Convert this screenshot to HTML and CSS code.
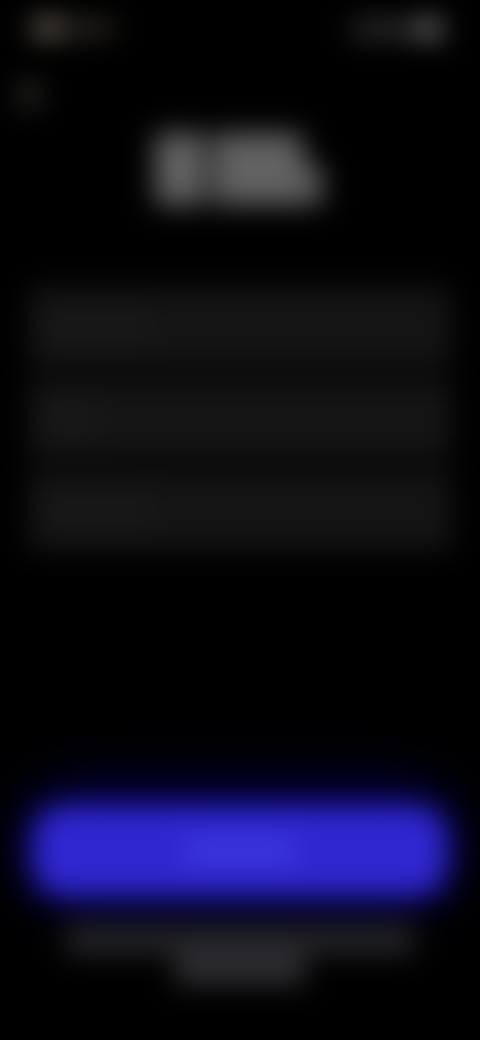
FILE: index.html
```html
<!DOCTYPE html>
<html lang="en">
<head>
<meta charset="utf-8">
<title>Blurred screen</title>
<link rel="stylesheet" href="styles.css">
</head>
<body>
<main class="screen">
  <header class="status">
    <div class="status-left"><span class="time"></span><span class="time-tail"></span></div>
    <div class="status-right"><span class="signal"></span><span class="battery"></span></div>
  </header>
  <div class="back"></div>
  <div class="title">
    <span class="title-a"></span>
    <span class="title-b"></span>
    <span class="title-c"></span>
  </div>
  <section class="list">
    <div class="row"><span class="row-label"></span></div>
    <div class="row"><span class="row-label short"></span></div>
    <div class="row"><span class="row-label"></span></div>
  </section>
  <div class="cta"><span class="cta-label"></span></div>
  <footer class="legal">
    <span class="legal-one"></span>
    <span class="legal-two"></span>
  </footer>
</main>
</body>
</html>
```
FILE: styles.css
```css
html, body {
  margin: 0;
  padding: 0;
  background: #000;
}
.screen {
  width: 480px;
  height: 1040px;
  overflow: hidden;
  display: flex;
  flex-direction: column;
  background: #000;
  filter: blur(14px);
}
.status {
  display: flex;
  justify-content: space-between;
  padding: 19px 38px 0 34px;
  height: 18px;
}
.status-left, .status-right {
  display: flex;
}
.time { width: 24px; height: 18px; background: #84796c; }
.time-tail { width: 56px; height: 14px; background: #38342e; margin-top: 2px; }
.signal { width: 66px; height: 14px; background: #3e3e3e; margin-top: 3px; }
.battery { width: 24px; height: 18px; background: #808080; margin-top: 1px; }
.back {
  width: 18px;
  height: 22px;
  margin: 47px 0 0 21px;
  background: #3a3a36;
}
.title {
  display: flex;
  align-items: flex-end;
  height: 72px;
  margin: 27px 0 0 155px;
}
.title-a { width: 50px; height: 72px; background: #636363; margin-right: 8px; }
.title-b { width: 90px; height: 72px; background: #626262; }
.title-c { width: 20px; height: 40px; background: #5a5a5a; }
.list {
  display: flex;
  flex-direction: column;
  gap: 12px;
  margin: 82px 28px 0;
}
.row {
  height: 80px;
  background: #141414;
  border-radius: 8px;
  display: flex;
  align-items: center;
  padding-left: 14px;
}
.row-label { width: 110px; height: 36px; background: #181818; }
.row-label.short { width: 60px; }
.cta {
  align-self: center;
  width: 412px;
  height: 88px;
  margin-top: 256px;
  background: #3026cf;
  border-radius: 30px;
  box-shadow: 0 0 30px #0c0a90, 0 -10px 70px #06064e;
  display: flex;
  justify-content: center;
  align-items: center;
}
.cta-label { width: 110px; height: 28px; background: #3c36de; }
.legal {
  display: flex;
  flex-direction: column;
  align-items: center;
  margin-top: 30px;
}
.legal-one { width: 350px; height: 30px; background: #242428; }
.legal-two { width: 130px; height: 30px; background: #2e2e32; }
```
